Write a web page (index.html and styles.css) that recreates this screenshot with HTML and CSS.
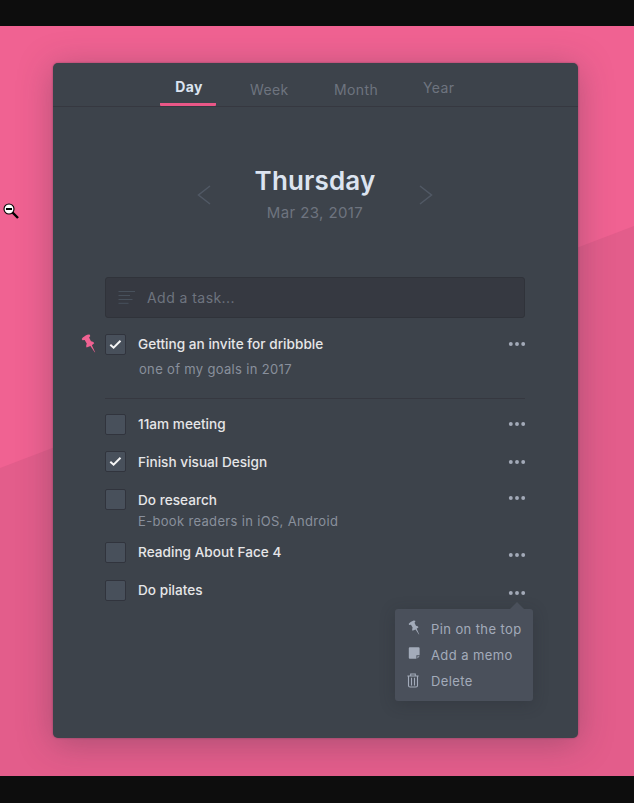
FILE: index.html
```html
<!DOCTYPE html>
<html lang="en">
<head>
<meta charset="utf-8">
<title>Tasks</title>
<link rel="stylesheet" href="styles.css">
</head>
<body>
<svg class="symbols" aria-hidden="true">
  <symbol id="dots" viewBox="0 0 18 6"><circle cx="2.8" cy="3" r="1.95"/><circle cx="9" cy="3" r="1.95"/><circle cx="15.2" cy="3" r="1.95"/></symbol>
  <symbol id="check" viewBox="0 0 13 11"><path d="M1.3 5.7 4.6 8.7 11.5 1.7" fill="none" stroke="currentColor" stroke-width="2"/></symbol>
  <symbol id="pin" viewBox="0 0 15 19"><path d="M.7 5.1C2 3.2 4.2 1.5 7.1.6L9 .8 9.2 2.2 8.1 3.4 10 7.3C11.7 7.5 12.9 8.2 13.2 9.3L10.9 11.2 14.2 18.4 13.5 18 9.4 12 5.6 13.5C5 12.3 5.1 11 5.8 9.7L3.7 5.9 1.5 6.3Z" fill="currentColor"/></symbol>
</svg>
<main class="stage">
  <section class="card">
    <nav class="tabs">
      <a class="tab active"><span>Day</span></a>
      <a class="tab week"><span>Week</span></a>
      <a class="tab month"><span>Month</span></a>
      <a class="tab year"><span>Year</span></a>
    </nav>
    <header class="date">
      <svg class="arrow" viewBox="0 0 14 20"><path d="M13 1 1.5 10 13 19"/></svg>
      <div class="date-text"><h1>Thursday</h1><p>Mar 23, 2017</p></div>
      <svg class="arrow" viewBox="0 0 14 20"><path d="M1 1 12.5 10 1 19"/></svg>
    </header>
    <div class="input">
      <svg class="lines" viewBox="0 0 17 14"><path d="M.5 1.5H17M.5 5.5H12M.5 9.5H14.5M.5 13.3H10.5"/></svg>
      <span>Add a task...</span>
    </div>
    <ul class="tasks">
      <li class="task t1">
        <svg class="pinned"><use href="#pin"/></svg>
        <span class="box"><svg><use href="#check"/></svg></span>
        <div class="copy"><h2>Getting an invite for dribbble</h2><p>one of my goals in 2017</p></div>
        <svg class="more"><use href="#dots"/></svg>
      </li>
      <li class="task t2">
        <span class="box"></span>
        <div class="copy"><h2>11am meeting</h2></div>
        <svg class="more"><use href="#dots"/></svg>
      </li>
      <li class="task t3">
        <span class="box"><svg><use href="#check"/></svg></span>
        <div class="copy"><h2>Finish visual Design</h2></div>
        <svg class="more"><use href="#dots"/></svg>
      </li>
      <li class="task t4">
        <span class="box"></span>
        <div class="copy"><h2>Do research</h2><p>E-book readers in iOS, Android</p></div>
        <svg class="more"><use href="#dots"/></svg>
      </li>
      <li class="task t5">
        <span class="box"></span>
        <div class="copy"><h2>Reading About Face 4</h2></div>
        <svg class="more"><use href="#dots"/></svg>
      </li>
      <li class="task t6">
        <span class="box"></span>
        <div class="copy"><h2>Do pilates</h2></div>
        <svg class="more"><use href="#dots"/></svg>
        <div class="menu">
          <a class="item pin"><svg viewBox="0 0 15 19"><use href="#pin" width="15" height="19"/></svg><span>Pin on the top</span></a>
          <a class="item memo"><svg viewBox="0 0 12 12"><path d="M1.8.2H10.6a1 1 0 0 1 1 1V8.2H8.4V11.8H1.8a1 1 0 0 1-1-1V1.2a1 1 0 0 1 1-1ZM9.4 9.2H11.6L9.4 11.6Z"/></svg><span>Add a memo</span></a>
          <a class="item trash"><svg viewBox="0 0 12 15"><path d="M.4 3H11.6M3.7 3V1H8.3V3M1.5 3V12.4Q1.5 14 3 14H9Q10.5 14 10.5 12.4V3M4.5 4.8V12.4M7.5 4.8V12.4" fill="none" stroke="currentColor" stroke-width="1.1"/></svg><span>Delete</span></a>
        </div>
      </li>
    </ul>
  </section>
</main>
<svg class="cursor" viewBox="0 0 16 16"><path d="M9.5 9.5 15 15" stroke="#000" stroke-width="2.4"/><circle cx="6" cy="6" r="5" fill="#fff" stroke="#000" stroke-width="1.1"/><path d="M3 6H9" stroke="#000" stroke-width="2"/></svg>
</body>
</html>
```
FILE: styles.css
```css
* { box-sizing: border-box; margin: 0; padding: 0; }
body {
  width: 634px;
  height: 803px;
  padding: 26px 0 27px;
  overflow: hidden;
  background: #0d0d0d;
  font-family: Inter, "Liberation Sans", sans-serif;
}
svg { display: block; }
.symbols { position: absolute; width: 0; height: 0; }
.stage {
  position: relative;
  height: 750px;
  padding: 37px 56.5px 0 52.5px;
  overflow: hidden;
  background: #f06292;
}
.stage::before {
  content: "";
  position: absolute;
  inset: 0;
  background: #e35d8b;
  clip-path: polygon(0 442px, 100% 200px, 100% 100%, 0 100%);
}
.card {
  position: relative;
  height: 675px;
  border-radius: 5px;
  background: #3d434b;
  box-shadow: 0 5px 34px rgba(60, 50, 65, .34), 0 0 2px rgba(60, 50, 65, .5);
}
.tabs {
  display: flex;
  height: 44px;
  padding-left: 107.5px;
  border-bottom: 1px solid #363840;
  color: #6e747f;
  font-size: 14px;
  line-height: 18px;
  letter-spacing: .4px;
}
.active {
  width: 56px;
  height: 43px;
  padding-top: 15px;
  border-bottom: 3px solid #ea5787;
  border-radius: 1px;
  color: #dbe3f0;
  font-weight: 700;
  text-align: center;
}
.active span { padding-left: 2px; }
.week { margin: 18px 0 0 34px; width: 84px; }
.month { margin-top: 18px; width: 89px; }
.year { margin-top: 16px; }
.date {
  display: flex;
  justify-content: space-between;
  width: 236px;
  height: 170px;
  margin-left: 144.5px;
  padding-top: 57px;
}
.date-text { text-align: center; }
.date h1 {
  color: #dce4f0;
  font-size: 26px;
  font-weight: 600;
  line-height: 34px;
  letter-spacing: .15px;
}
.date p {
  margin-top: 5px;
  color: #6e747f;
  font-size: 15px;
  line-height: 20px;
  letter-spacing: .4px;
}
.arrow {
  width: 14px;
  height: 20px;
  margin-top: 21px;
  fill: none;
  stroke: #515965;
  stroke-width: 1.5;
}
.input {
  display: flex;
  align-items: center;
  width: 420px;
  height: 41px;
  margin-left: 52.5px;
  padding: 0 0 1px 12px;
  border: 1px solid #30333a;
  border-radius: 3px;
  background: #363941;
  color: #6e747f;
  font-size: 14px;
  letter-spacing: .45px;
}
.lines { width: 17px; height: 14px; margin-right: 12px; stroke: #48515c; stroke-width: 1; }
.tasks { width: 420px; margin-left: 52.5px; list-style: none; }
.task { position: relative; display: flex; align-items: flex-start; }
.box {
  display: grid;
  place-items: center;
  flex: none;
  width: 21px;
  height: 21px;
  border: 1px solid #31343d;
  border-radius: 2px;
  background: #48505b;
  color: #f5f5f5;
}
.box svg { width: 13px; height: 11px; }
.copy { flex: 1; margin-left: 12px; }
.copy h2 {
  color: #e6e6e8;
  font-size: 13.6px;
  font-weight: 500;
  line-height: 20px;
  letter-spacing: .02px;
}
.copy p { color: #89909c; font-size: 13px; line-height: 18px; letter-spacing: .33px; }
.more { flex: none; width: 18px; height: 6px; margin: 8px -1px 0 0; fill: #a3aab8; }
.pinned { position: absolute; left: -24px; width: 15px; height: 19px; color: #f06292; }
.t1 { height: 81px; padding-top: 16px; border-bottom: 1px solid #363840; }
.t1 .pinned { top: 16px; }
.t1 p { margin: 6px 0 0 1px; }
.t1 .more { margin-top: 7px; }
.t2 { height: 52px; padding-top: 15px; }
.t2 .more { margin-top: 7px; }
.t3 { height: 38px; }
.t3 .copy { padding-top: 1px; }
.t4 { height: 53px; }
.t4 .copy { padding-top: 1px; }
.t4 p { margin-top: 2px; }
.t4 .more { margin-top: 6px; }
.t5 { height: 38px; }
.t5 .more, .t6 .more { margin-top: 10px; }
.menu {
  position: absolute;
  top: 29px;
  left: 290px;
  width: 137.5px;
  height: 92px;
  padding: 7px 0 0 12px;
  border-radius: 3px;
  background: #4a505b;
  color: #a3abba;
  box-shadow: 0 3px 15px rgba(38, 39, 48, .3);
}
.menu::before {
  content: "";
  position: absolute;
  top: -7px;
  right: 9px;
  border: 7px solid transparent;
  border-top: 0;
  border-bottom-color: #4a505b;
}
.item { display: flex; height: 26px; font-size: 13px; line-height: 26px; letter-spacing: .4px; white-space: nowrap; }
.item svg { width: 12px; height: 15px; margin: 4px 12px 0 0; fill: currentColor; }
.pin svg, .memo svg { margin-right: 11px; margin-left: 1px; }
.memo svg { height: 12px; margin-top: 5px; }
.trash svg { margin-top: 5px; }
.cursor { position: absolute; left: 3px; top: 203px; width: 16px; height: 16px; }
```
